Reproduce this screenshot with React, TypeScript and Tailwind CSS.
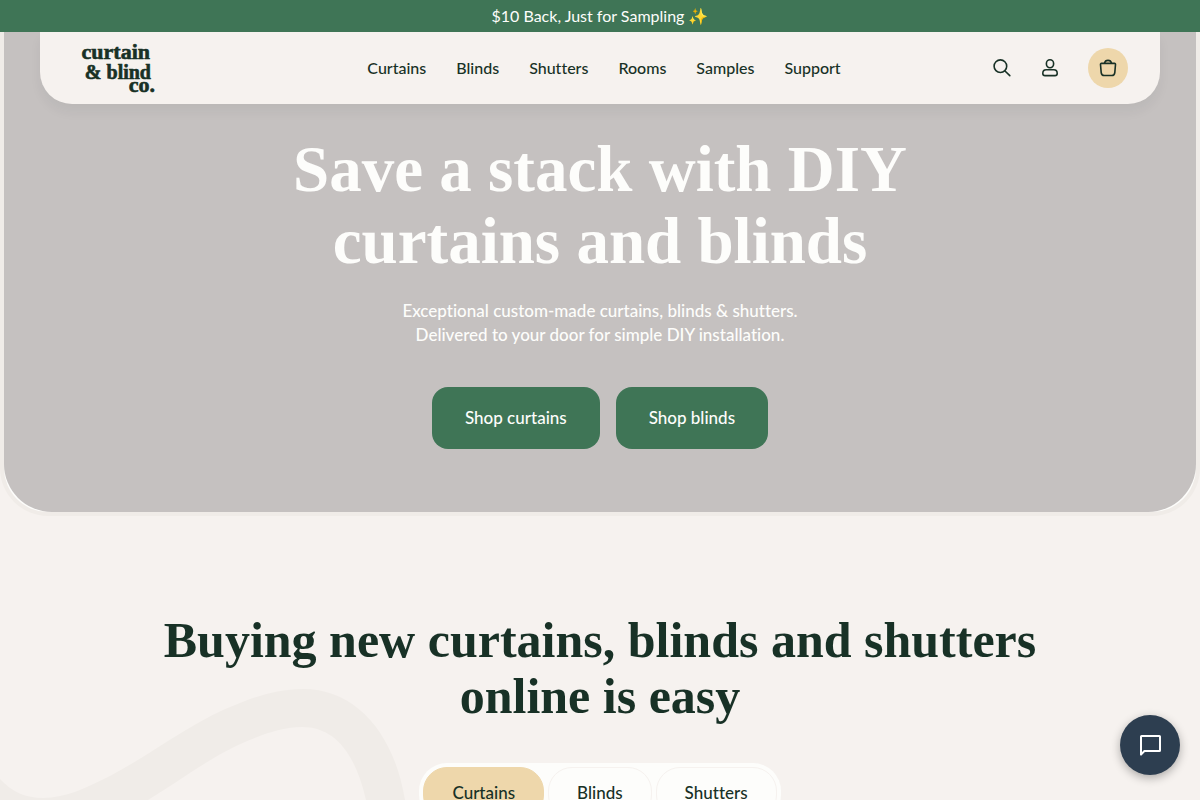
const navLinks = ["Curtains", "Blinds", "Shutters", "Rooms", "Samples", "Support"];
const tabs = ["Curtains", "Blinds", "Shutters"];

function Logo() {
    return (
        <svg
            className="h-14 w-20 font-['Liberation_Serif',serif] font-bold"
            viewBox="0 0 80 56"
            fill="currentColor"
            stroke="currentColor"
            strokeWidth="0.6"
            role="img"
            aria-label="curtain & blind co."
        >
            <text x="70" y="19" textAnchor="end" fontSize="22">curtain</text>
            <text x="71" y="39" textAnchor="end" fontSize="20">&amp; blind</text>
            <text x="75" y="52" textAnchor="end" fontSize="22">co.</text>
        </svg>
    );
}

function SearchIcon() {
    return (
        <svg className="h-6 w-6" viewBox="0 0 24 24" fill="none" stroke="currentColor" strokeWidth="1.6" strokeLinecap="round">
            <circle cx="10.4" cy="10.2" r="6.3" />
            <path d="M15 15L19.8 19.6" />
        </svg>
    );
}

function AccountIcon() {
    return (
        <svg className="h-6 w-6" viewBox="0 0 24 24" fill="none" stroke="currentColor" strokeWidth="1.6" strokeLinejoin="round">
            <rect x="8.4" y="3.8" width="7.2" height="7.9" rx="3.6" />
            <path d="M8.2 13.8H15.8C17.8 13.8 19.2 15.4 19.2 17.4C19.2 18.8 18.4 19.6 17 19.6H7C5.6 19.6 4.8 18.8 4.8 17.4C4.8 15.4 6.2 13.8 8.2 13.8Z" />
        </svg>
    );
}

function BagIcon() {
    return (
        <svg className="h-6 w-6" viewBox="0 0 24 24" fill="none" stroke="currentColor" strokeWidth="1.6" strokeLinejoin="round">
            <path d="M5.4 7.4H18.6C19.2 7.4 19.6 7.9 19.5 8.5L18.8 16.6C18.6 18.5 17.5 19.5 15.7 19.5H8.3C6.5 19.5 5.4 18.5 5.2 16.6L4.5 8.5C4.4 7.9 4.8 7.4 5.4 7.4Z" />
            <path d="M8.5 7.2C8.9 5.4 10.1 4.4 12 4.4C13.9 4.4 15.1 5.4 15.5 7.2" />
        </svg>
    );
}

function Header() {
    return (
        <header className="mx-9 grid h-[72px] grid-cols-[1fr_auto_1fr] items-center rounded-b-[32px] bg-[#f6f2ef] pr-8 pl-10 text-[#183126] shadow-[0_8px_12px_rgba(24,49,38,0.05)]">
            <a href="#" className="justify-self-start">
                <Logo />
            </a>
            <nav className="flex gap-[30px] text-base font-medium">
                {navLinks.map((link) => (
                    <a key={link} href="#" className="hover:underline">
                        {link}
                    </a>
                ))}
            </nav>
            <div className="flex items-center gap-6 justify-self-end">
                <button aria-label="Search">
                    <SearchIcon />
                </button>
                <button aria-label="Account">
                    <AccountIcon />
                </button>
                <button aria-label="Cart" className="ml-0.5 flex h-10 w-10 items-center justify-center rounded-full bg-[#eed7ab]">
                    <BagIcon />
                </button>
            </div>
        </header>
    );
}

function Hero() {
    return (
        <div className="rounded-b-[48px] border-4 border-t-0 border-[#f0ece8] bg-[#fdfdfb]">
            <section className="rounded-b-[48px] bg-[#c5c1c0] pb-[63px] text-center text-[#fdfdfb]">
                <Header />
                <h1 className="mx-auto mt-[29px] max-w-3xl font-['Liberation_Serif',serif] text-[65px] leading-[72px] font-bold">
                    Save a stack with DIY <br />
                    curtains and blinds
                </h1>
                <p className="mt-[22px] text-[17px] leading-6 font-medium">
                    Exceptional custom-made curtains, blinds &amp; shutters.
                    <br />
                    Delivered to your door for simple DIY installation.
                </p>
                <div className="mt-10 flex justify-center gap-4 text-[17px] font-medium">
                    <a href="#" className="rounded-2xl bg-[#3f7556] px-[33px] py-[19px] leading-6">
                        Shop curtains
                    </a>
                    <a href="#" className="rounded-2xl bg-[#3f7556] px-[33px] py-[19px] leading-6">
                        Shop blinds
                    </a>
                </div>
            </section>
        </div>
    );
}

function Ribbon() {
    return (
        <svg className="pointer-events-none absolute top-40 left-0 h-40 w-[420px]" viewBox="0 676 420 160" fill="#f0ece8" aria-hidden="true">
            <path d="M0 779C12 792 26 798 43 798C66 798 88 787 110 776C157 751 192 721 240 703C260 695 280 689 303 689C356 689 394 733 405 800L410 836H374L366 800C355 752 334 727 302 727C282 727 260 735 236 746C205 761 178 782 148 800C126 813 105 828 80 836H0Z" />
        </svg>
    );
}

export default function App() {
    return (
        <div className="min-h-screen bg-[#f6f2ef] font-[Lato,sans-serif] text-[#183126] [font-variant-ligatures:none]">
            <div className="flex h-8 items-center justify-center bg-[#3f7556] text-base text-[#fdfdfb]">
                $10 Back, Just for Sampling ✨
            </div>
            <Hero />
            <section className="relative overflow-hidden px-4 pt-24 pb-20">
                <Ribbon />
                <h2 className="relative mx-auto max-w-4xl text-center font-['Liberation_Serif',serif] text-[50px] leading-14 font-bold">
                    Buying new curtains, blinds and shutters online is easy
                </h2>
                <div className="relative mx-auto mt-[39px] flex w-fit gap-1 rounded-[28px] bg-[#fdfdfb] p-1 text-[17px] font-medium" role="tablist">
                    {tabs.map((tab, i) => (
                        <button
                            key={tab}
                            role="tab"
                            aria-selected={i === 0}
                            className="h-[52px] rounded-3xl border border-[#f6f2ef] px-7 aria-selected:border-[#eed7ab] aria-selected:bg-[#eed7ab]"
                        >
                            {tab}
                        </button>
                    ))}
                </div>
            </section>
            <button
                aria-label="Open chat"
                className="fixed right-5 bottom-[25px] flex h-15 w-15 items-center justify-center rounded-full bg-[#2d3e50] text-white shadow-[0_3px_10px_rgba(0,0,0,0.3)]"
            >
                <svg className="h-6 w-6" viewBox="0 0 24 24" fill="none" stroke="currentColor" strokeWidth="2" strokeLinejoin="round">
                    <path d="M3 21.6V3.6C3 3.2 3.2 3 3.6 3H21.4C21.8 3 22 3.2 22 3.6V17.4C22 17.8 21.8 18 21.4 18H6.4Z" />
                </svg>
            </button>
        </div>
    );
}
